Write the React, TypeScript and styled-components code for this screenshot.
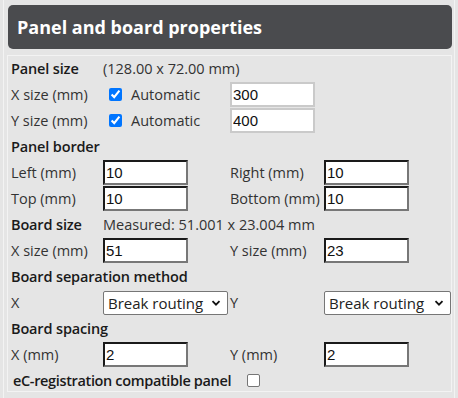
import styled, { createGlobalStyle } from 'styled-components';

const GlobalStyle = createGlobalStyle`
  body {
    margin: 0;
    background: #e5e5e5;
    font-family: 'Open Sans', 'Liberation Sans', sans-serif;
    color: #333;
  }
`;

const Frame = styled.div`
  margin-left: 3px;
  width: 452px;
  height: 398px;
  box-sizing: border-box;
  border-left: 1px solid #f3f3f3;
  border-right: 1px solid #f3f3f3;
  padding: 5px 2px 0 4px;
`;

const Header = styled.div`
  height: 44px;
  background: #4a4b4e;
  border-radius: 5px;
  color: #fff;
  font-weight: 700;
  font-size: 18px;
  display: flex;
  align-items: center;
  padding-left: 9px;
`;

const Box = styled.div`
  margin-top: 6px;
  margin-left: -1px;
  border: 1px solid #f3f3f3;
  padding: 0 0 0 3px;
  height: 337px;
  box-sizing: border-box;
`;

const Grid = styled.div`
  display: grid;
  grid-template-columns: 92px 127px 94px 1fr;
  grid-auto-rows: 25px;
  row-gap: 1px;
  align-items: center;
  font-size: 14.5px;
  white-space: nowrap;
`;

const Heading = styled.div`
  font-weight: 600;
  color: #1a1a1a;
  letter-spacing: -0.15px;
`;

const Label = styled.div<{ $span?: number }>`
  grid-column: span ${p => p.$span ?? 1};
  display: flex;
  align-items: center;
`;

const Check = styled.input.attrs({ type: 'checkbox' })`
  width: 13px;
  height: 13px;
  margin: 0 9px 0 6px;
  accent-color: #0075ff;
`;

const Field = styled.input<{ $disabled?: boolean }>`
  width: 85px;
  height: 25px;
  box-sizing: border-box;
  padding: 0 1px;
  font-family: 'Liberation Sans', Arial, sans-serif;
  font-size: 15px;
  color: #111;
  background: #fff;
  border: 2px solid;
  border-color: ${p => (p.$disabled ? '#cacaca' : '#1a1a1a #777 #777 #1a1a1a')};
  outline: none;
  border-radius: 0;
`;

const SelectBox = styled.div<{ $width: number }>`
  width: ${p => p.$width}px;
  height: 24px;
  box-sizing: border-box;
  border: 1px solid #767676;
  border-radius: 2px;
  background: #fff;
  display: flex;
  align-items: center;
  justify-content: space-between;
  padding: 0 6px 0 4px;
  font-size: 15px;
  color: #222;
`;

const FooterRow = styled.div`
  grid-column: 1 / -1;
  display: flex;
  align-items: center;
  padding-left: 2px;
  font-weight: 600;
  color: #1a1a1a;
  letter-spacing: -0.35px;
`;

const PlainCheck = styled.span`
  width: 11px;
  height: 11px;
  margin-left: 16px;
  border: 1px solid #767676;
  border-radius: 2px;
  background: #fff;
`;

const Chevron = () => (
  <svg width="10" height="10" viewBox="0 0 10 10">
    <path d="M1.5 3.2 L5 6.7 L8.5 3.2" fill="none" stroke="#111" strokeWidth="1.8" />
  </svg>
);

const Select = ({ width }: { width: number }) => (
  <SelectBox $width={width}>
    <span>Break routing</span>
    <Chevron />
  </SelectBox>
);

const Empty = styled.div``;

export default function App() {
  return (
    <>
      <GlobalStyle />
      <Frame>
        <Header>Panel and board properties</Header>
        <Box>
          <Grid>
            <Heading>Panel size</Heading>
            <Label $span={3}>(128.00 x 72.00 mm)</Label>

            <Label>X size (mm)</Label>
            <Label>
              <Check defaultChecked />
              Automatic
            </Label>
            <Label>
              <Field $disabled defaultValue="300" />
            </Label>
            <Empty />

            <Label>Y size (mm)</Label>
            <Label>
              <Check defaultChecked />
              Automatic
            </Label>
            <Label>
              <Field $disabled defaultValue="400" />
            </Label>
            <Empty />

            <Heading>Panel border</Heading>
            <Label $span={3} />

            <Label>Left (mm)</Label>
            <Label>
              <Field defaultValue="10" />
            </Label>
            <Label>Right (mm)</Label>
            <Label>
              <Field defaultValue="10" />
            </Label>

            <Label>Top (mm)</Label>
            <Label>
              <Field defaultValue="10" />
            </Label>
            <Label>Bottom (mm)</Label>
            <Label>
              <Field defaultValue="10" />
            </Label>

            <Heading>Board size</Heading>
            <Label $span={3}>Measured: 51.001 x 23.004 mm</Label>

            <Label>X size (mm)</Label>
            <Label>
              <Field defaultValue="51" />
            </Label>
            <Label>Y size (mm)</Label>
            <Label>
              <Field defaultValue="23" />
            </Label>

            <Label $span={4}>
              <Heading>Board separation method</Heading>
            </Label>

            <Label>X</Label>
            <Label>
              <Select width={125} />
            </Label>
            <Label>Y</Label>
            <Label>
              <Select width={127} />
            </Label>

            <Label $span={4}>
              <Heading>Board spacing</Heading>
            </Label>

            <Label>X (mm)</Label>
            <Label>
              <Field defaultValue="2" />
            </Label>
            <Label>Y (mm)</Label>
            <Label>
              <Field defaultValue="2" />
            </Label>

            <FooterRow>
              eC-registration compatible panel
              <PlainCheck />
            </FooterRow>
          </Grid>
        </Box>
      </Frame>
    </>
  );
}
